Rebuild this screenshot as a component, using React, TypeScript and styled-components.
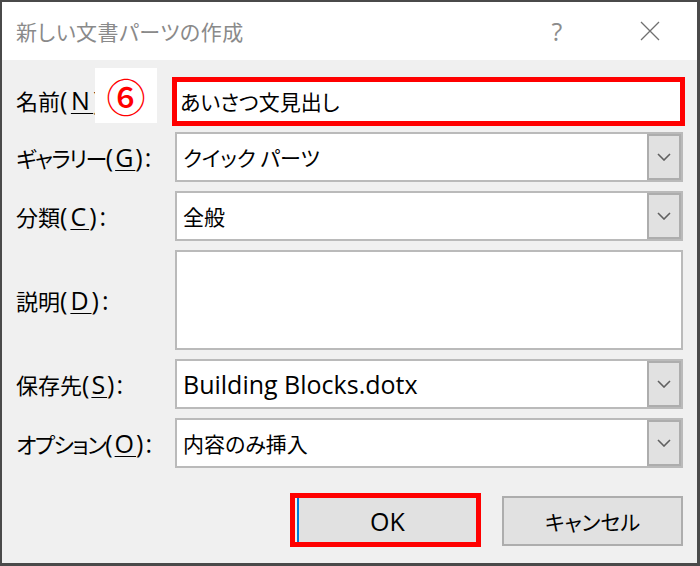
import React from "react";
import styled, { createGlobalStyle } from "styled-components";

const Global = createGlobalStyle`
  html, body { margin: 0; padding: 0; background: #f0f0f0; }
  * { box-sizing: border-box; }
`;

const FONT = `"Noto Sans CJK JP", "Noto Sans", sans-serif`;

const Window = styled.div`
  width: 700px;
  height: 566px;
  display: flex;
  flex-direction: column;
  background: #f0f0f0;
  border: 2px solid #4a4a4a;
  border-right-width: 3px;
  border-bottom-width: 3px;
  font-family: ${FONT};
  font-feature-settings: "palt";
  color: #000;
`;

const TitleBar = styled.div`
  height: 58px;
  flex: none;
  background: #fff;
  display: flex;
  align-items: center;
  padding-left: 14px;
`;

const Title = styled.div`
  flex: 1;
  font-size: 21px;
  line-height: 1;
  color: #8a8a8a;
  letter-spacing: 0.5px;
`;

const TitleButton = styled.div<{ $w: number; $mr: number }>`
  width: ${(p) => p.$w}px;
  margin-right: ${(p) => p.$mr}px;
  height: 40px;
  display: flex;
  align-items: center;
  justify-content: center;
  color: #8c8c8c;
  font-family: "Open Sans", sans-serif;
  font-size: 25px;
  line-height: 1;
`;

const Body = styled.div`
  flex: 1;
  display: flex;
  flex-direction: column;
  padding: 17px 14px 18px 14px;
`;

const Form = styled.div`
  display: grid;
  grid-template-columns: 159px 1fr;
  row-gap: 9px;
  align-items: center;
`;

const Label = styled.div`
  position: relative;
  font-size: 22px;
  line-height: 1;
  align-self: stretch;
  display: flex;
  align-items: center;
  white-space: nowrap;
`;

const Kana = styled.span<{ $tight?: boolean }>`
  letter-spacing: ${(p) => (p.$tight ? "-1.5px" : "0")};
`;

const Latin = styled.span<{ $spacing?: number }>`
  font-family: "Open Sans", "Noto Sans", sans-serif;
  font-size: 25px;
  line-height: 1;
  letter-spacing: ${(p) => p.$spacing ?? 0}px;
`;

const Key = styled.span`
  text-decoration: underline;
  text-underline-offset: 3px;
  text-decoration-thickness: 1px;
`;

const StepBadge = styled.div`
  position: absolute;
  left: 79px;
  top: -9px;
  width: 62px;
  height: 55px;
  background: #fff;
  display: flex;
  align-items: center;
  justify-content: center;
  color: #ff0000;
  font-size: 39px;
  font-weight: 500;
  line-height: 1;
`;

const NameField = styled.div`
  height: 49px;
  margin: 0 -2px -3px -3px;
  border: 5px solid #ff0000;
  background: #fff;
  display: flex;
  align-items: center;
  padding-left: 3px;
  font-size: 21px;
  line-height: 1;
`;

const Combo = styled.div`
  height: 50px;
  border: 2px solid #bababa;
  background: #fff;
  display: flex;
  align-items: stretch;
`;

const ComboText = styled.div`
  flex: 1;
  display: flex;
  align-items: center;
  padding-left: 6px;
  font-size: 21px;
  line-height: 1;
`;

const DropButton = styled.div`
  width: 34px;
  background: #e1e1e1;
  border: 2px solid #adadad;
  display: flex;
  align-items: center;
  justify-content: center;
`;

const TextArea = styled.div`
  height: 100px;
  border: 2px solid #bababa;
  background: #fff;
`;

const Footer = styled.div`
  margin-top: 28px;
  display: flex;
  justify-content: flex-end;
  gap: 24px;
`;

const Button = styled.div<{ $default?: boolean }>`
  position: relative;
  width: 181px;
  height: 50px;
  background: #e1e1e1;
  border: 2px solid ${(p) => (p.$default ? "#0078d7" : "#adadad")};
  display: flex;
  align-items: center;
  justify-content: center;
  font-size: 21px;
  line-height: 1;
`;

const Highlight = styled.div`
  position: absolute;
  left: -9px;
  top: -5px;
  right: -5px;
  bottom: -3px;
  border: 5px solid #ff0000;
  pointer-events: none;
`;

const Chevron = () => (
  <svg width="14" height="8" viewBox="0 0 14 8">
    <path d="M1 1 L7 7 L13 1" fill="none" stroke="#606060" strokeWidth="1.6" />
  </svg>
);

const CloseIcon = () => (
  <svg width="20" height="20" viewBox="0 0 20 20">
    <path d="M1 1 L19 19 M19 1 L1 19" stroke="#707070" strokeWidth="1.3" />
  </svg>
);

const ComboBox = ({ children }: { children: React.ReactNode }) => (
  <Combo>
    <ComboText>{children}</ComboText>
    <DropButton>
      <Chevron />
    </DropButton>
  </Combo>
);

const FieldLabel = ({
  text,
  k,
  tight,
  spacing = 2,
}: {
  text: string;
  k: string;
  tight?: boolean;
  spacing?: number;
}) => (
  <>
    <Kana $tight={tight}>{text}</Kana>
    <Latin $spacing={spacing}>
      (<Key>{k}</Key>):
    </Latin>
  </>
);

export default function App() {
  return (
    <>
      <Global />
      <Window>
        <TitleBar>
          <Title>新しい文書パーツの作成</Title>
          <TitleButton $w={40} $mr={53}>?</TitleButton>
          <TitleButton $w={40} $mr={27}>
            <CloseIcon />
          </TitleButton>
        </TitleBar>
        <Body>
          <Form>
            <Label>
              <FieldLabel text="名前" k="N" spacing={3.5} />
              <StepBadge>⑥</StepBadge>
            </Label>
            <NameField>あいさつ文見出し</NameField>

            <Label>
              <FieldLabel text="ギャラリー" k="G" tight />
            </Label>
            <ComboBox>クイック パーツ</ComboBox>

            <Label>
              <FieldLabel text="分類" k="C" spacing={3} />
            </Label>
            <ComboBox>全般</ComboBox>

            <Label>
              <FieldLabel text="説明" k="D" spacing={3} />
            </Label>
            <TextArea />

            <Label>
              <FieldLabel text="保存先" k="S" />
            </Label>
            <ComboBox>
              <Latin>Building Blocks.dotx</Latin>
            </ComboBox>

            <Label>
              <FieldLabel text="オプション" k="O" tight />
            </Label>
            <ComboBox>内容のみ挿入</ComboBox>
          </Form>
          <Footer>
            <Button $default>
              <Latin>OK</Latin>
              <Highlight />
            </Button>
            <Button>キャンセル</Button>
          </Footer>
        </Body>
      </Window>
    </>
  );
}
